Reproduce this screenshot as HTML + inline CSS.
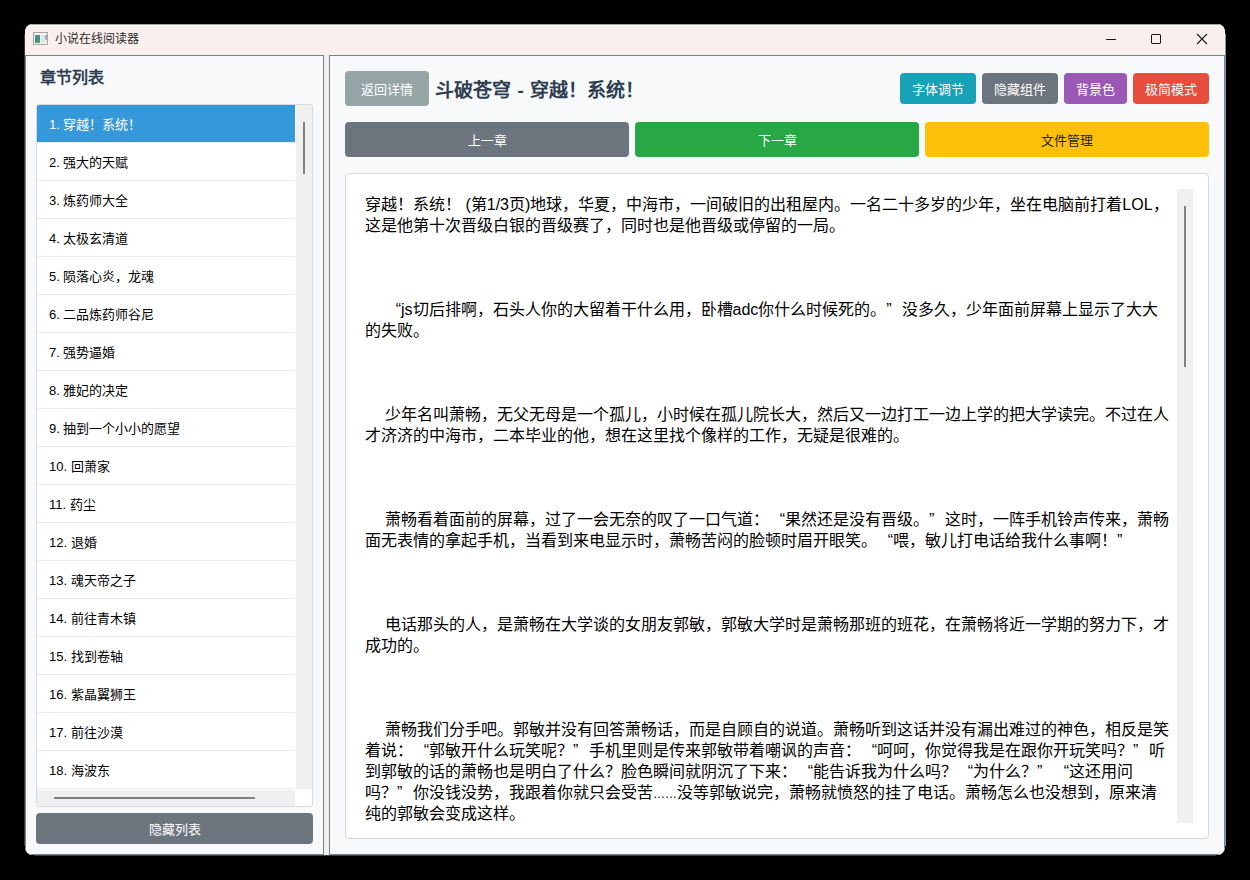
<!DOCTYPE html>
<html lang="zh-CN">
<head>
<meta charset="utf-8">
<style>
*{box-sizing:border-box;margin:0;padding:0}
html,body{width:1250px;height:880px;overflow:hidden;background:#000;font-family:"Liberation Sans",sans-serif}
#win{position:absolute;left:25px;top:24px;width:1200px;height:831px;border-radius:8px;overflow:hidden;background:#f8f9fa}
#pg{position:absolute;left:-25px;top:-24px;width:1250px;height:880px}
#pg div{position:absolute}
.tb{left:25px;top:24px;width:1200px;height:31px;background:#f9f0ee}
.wt{left:55px;top:30px;font-size:12px;line-height:18px;color:#2a2a2a;white-space:nowrap}
.panel{top:55px;height:800px;border:1px solid #7b8089;background:#f8f9fa}
.btn{border-radius:4px;color:#fff;font-size:13px;text-align:center;white-space:nowrap;padding-top:1px}
.list{left:36px;top:104px;width:277px;height:703px;border:1px solid #d5dae0;border-radius:3px;background:#fff;overflow:hidden}
.it{left:0;width:258px;height:38px;border-bottom:1px solid #e9ecef;font-size:13px;line-height:37px;padding-left:12px;padding-top:1px;color:#000;white-space:nowrap}
.sel{background:#3498db;color:#fff}
.content{left:345px;top:173px;width:864px;height:666px;border:1px solid #d3d8de;border-radius:4px;background:#fff;overflow:hidden}
.lq{display:inline-block;width:16px;text-align:right}.rq{display:inline-block;width:16px;text-align:left}
.ln{position:static!important;height:21px}.ind{display:inline-block;width:20px}
.txt{left:19px;top:20px;font-size:16px;line-height:21px;color:#000;white-space:nowrap}
</style>
</head>
<body>
<div style="position:absolute;left:24px;top:34px;width:1px;height:812px;background:#3f3634"></div>
<div style="position:absolute;left:1225px;top:34px;width:1px;height:812px;background:#8796a1"></div>
<div style="position:absolute;left:34px;top:855px;width:1182px;height:1px;background:#3c4046"></div>
<div id="win"><div id="pg">
  <div class="tb"></div>
  <div style="left:25px;top:24px;width:1200px;height:1px;background:#95a6ae"></div>
  <div style="left:25px;top:25px;width:1200px;height:1px;background:#fcf5f3"></div>
  <div style="left:33px;top:32px;width:15px;height:13px;border:1px solid #a6a6a6;background:#f3f3f3">
    <div style="left:1px;top:2px;width:5px;height:8px;background:linear-gradient(160deg,#5b86c2,#3e8f7a 55%,#52b062)"></div>
    <div style="left:7px;top:2px;width:4px;height:8px;background:#e4e4e4"></div>
    <div style="left:11px;top:2px;width:2px;height:5px;background:linear-gradient(180deg,#7fa3d0,#9ed39a)"></div>
  </div>
  <div class="wt">小说在线阅读器</div>
  <!-- window controls -->
  <div style="left:1106px;top:39px;width:10px;height:1px;background:#1a1a1a"></div>
  <div style="left:1151px;top:34px;width:10px;height:10px;border:1px solid #1a1a1a;border-radius:1px"></div>
  <svg style="position:absolute;left:1196px;top:33px" width="12" height="12" viewBox="0 0 12 12"><path d="M1 1L11 11M11 1L1 11" stroke="#1a1a1a" stroke-width="1.1" fill="none"/></svg>

  <div style="left:324px;top:55px;width:5px;height:800px;background:#f0f0f0"></div>
  <div class="panel" style="left:25px;width:299px"></div>
  <div class="panel" style="left:329px;width:896px"></div>

  <!-- left panel -->
  <div style="left:40px;top:67px;font-size:16px;line-height:22px;font-weight:bold;color:#2c3e50;white-space:nowrap">章节列表</div>
  <div class="list">
    <div class="it sel" style="top:0">1. 穿越！系统！</div>
    <div class="it" style="top:38px">2. 强大的天赋</div>
    <div class="it" style="top:76px">3. 炼药师大全</div>
    <div class="it" style="top:114px">4. 太极玄清道</div>
    <div class="it" style="top:152px">5. 陨落心炎，龙魂</div>
    <div class="it" style="top:190px">6. 二品炼药师谷尼</div>
    <div class="it" style="top:228px">7. 强势逼婚</div>
    <div class="it" style="top:266px">8. 雅妃的决定</div>
    <div class="it" style="top:304px">9. 抽到一个小小的愿望</div>
    <div class="it" style="top:342px">10. 回萧家</div>
    <div class="it" style="top:380px">11. 药尘</div>
    <div class="it" style="top:418px">12. 退婚</div>
    <div class="it" style="top:456px">13. 魂天帝之子</div>
    <div class="it" style="top:494px">14. 前往青木镇</div>
    <div class="it" style="top:532px">15. 找到卷轴</div>
    <div class="it" style="top:570px">16. 紫晶翼狮王</div>
    <div class="it" style="top:608px">17. 前往沙漠</div>
    <div class="it" style="top:646px">18. 海波东</div>
    <div style="left:259px;top:0;width:16px;height:684px;background:#f0f0f0"></div>
    <div style="left:266px;top:17px;width:2px;height:52px;background:#808080"></div>
    <div style="left:0;top:685px;width:258px;height:16px;background:#f0f0f0"></div>
    <div style="left:17px;top:692px;width:201px;height:2px;background:#808080"></div>
  </div>
  <div class="btn" style="left:36px;top:813px;width:277px;height:31px;line-height:31px;background:#6c757d">隐藏列表</div>

  <!-- right panel -->
  <div class="btn" style="left:345px;top:71px;width:84px;height:35px;line-height:35px;background:#95a5a6">返回详情</div>
  <div style="left:435px;top:79px;font-size:19px;line-height:24px;font-weight:bold;color:#2c3e50;white-space:nowrap;word-spacing:1.3px">斗破苍穹 - 穿越！系统！</div>
  <div class="btn" style="left:900px;top:73px;width:76px;height:31px;line-height:31px;background:#17a2b8">字体调节</div>
  <div class="btn" style="left:982px;top:73px;width:76px;height:31px;line-height:31px;background:#6c757d">隐藏组件</div>
  <div class="btn" style="left:1064px;top:73px;width:63px;height:31px;line-height:31px;background:#9b59b6">背景色</div>
  <div class="btn" style="left:1133px;top:73px;width:76px;height:31px;line-height:31px;background:#e74c3c">极简模式</div>
  <div class="btn" style="left:345px;top:122px;width:284px;height:35px;line-height:35px;background:#6c757d">上一章</div>
  <div class="btn" style="left:635px;top:122px;width:284px;height:35px;line-height:35px;background:#28a745">下一章</div>
  <div class="btn" style="left:925px;top:122px;width:284px;height:35px;line-height:35px;background:#ffc107;color:#212529">文件管理</div>

  <div class="content">
    <div class="txt"><div class="ln">穿越！系统！ (第1/3页)地球，华夏，中海市，一间破旧的出租屋内。一名二十多岁的少年，坐在电脑前打着LOL，</div>
<div class="ln">这是他第十次晋级白银的晋级赛了，同时也是他晋级或停留的一局。</div>
<div class="ln"></div>
<div class="ln"></div>
<div class="ln"></div>
<div class="ln"><span class="ind"></span><span class="lq">“</span>js切后排啊，石头人你的大留着干什么用，卧槽adc你什么时候死的。<span class="rq">”</span>没多久，少年面前屏幕上显示了大大</div>
<div class="ln">的失败。</div>
<div class="ln"></div>
<div class="ln"></div>
<div class="ln"></div>
<div class="ln"><span class="ind"></span>少年名叫萧畅，无父无母是一个孤儿，小时候在孤儿院长大，然后又一边打工一边上学的把大学读完。不过在人</div>
<div class="ln">才济济的中海市，二本毕业的他，想在这里找个像样的工作，无疑是很难的。</div>
<div class="ln"></div>
<div class="ln"></div>
<div class="ln"></div>
<div class="ln"><span class="ind"></span>萧畅看着面前的屏幕，过了一会无奈的叹了一口气道：<span class="lq">“</span>果然还是没有晋级。<span class="rq">”</span>这时，一阵手机铃声传来，萧畅</div>
<div class="ln">面无表情的拿起手机，当看到来电显示时，萧畅苦闷的脸顿时眉开眼笑。<span class="lq">“</span>喂，敏儿打电话给我什么事啊！<span class="rq">”</span></div>
<div class="ln"></div>
<div class="ln"></div>
<div class="ln"></div>
<div class="ln"><span class="ind"></span>电话那头的人，是萧畅在大学谈的女朋友郭敏，郭敏大学时是萧畅那班的班花，在萧畅将近一学期的努力下，才</div>
<div class="ln">成功的。</div>
<div class="ln"></div>
<div class="ln"></div>
<div class="ln"></div>
<div class="ln"><span class="ind"></span>萧畅我们分手吧。郭敏并没有回答萧畅话，而是自顾自的说道。萧畅听到这话并没有漏出难过的神色，相反是笑</div>
<div class="ln">着说：<span class="lq">“</span>郭敏开什么玩笑呢？<span class="rq">”</span>手机里则是传来郭敏带着嘲讽的声音：<span class="lq">“</span>呵呵，你觉得我是在跟你开玩笑吗？<span class="rq">”</span>听</div>
<div class="ln">到郭敏的话的萧畅也是明白了什么？脸色瞬间就阴沉了下来：<span class="lq">“</span>能告诉我为什么吗？<span class="lq">“</span>为什么？<span class="rq">”</span><span class="lq">“</span>这还用问</div>
<div class="ln">吗？<span class="rq">”</span>你没钱没势，我跟着你就只会受苦<span style="font-size:12px">……</span>没等郭敏说完，萧畅就愤怒的挂了电话。萧畅怎么也没想到，原来清</div>
<div class="ln">纯的郭敏会变成这样。</div></div>
    <div style="left:831px;top:15px;width:16px;height:634px;background:#f0f0f0"></div>
    <div style="left:838px;top:32px;width:2px;height:161px;background:#808080"></div>
  </div>
</div></div>
</body>
</html>
